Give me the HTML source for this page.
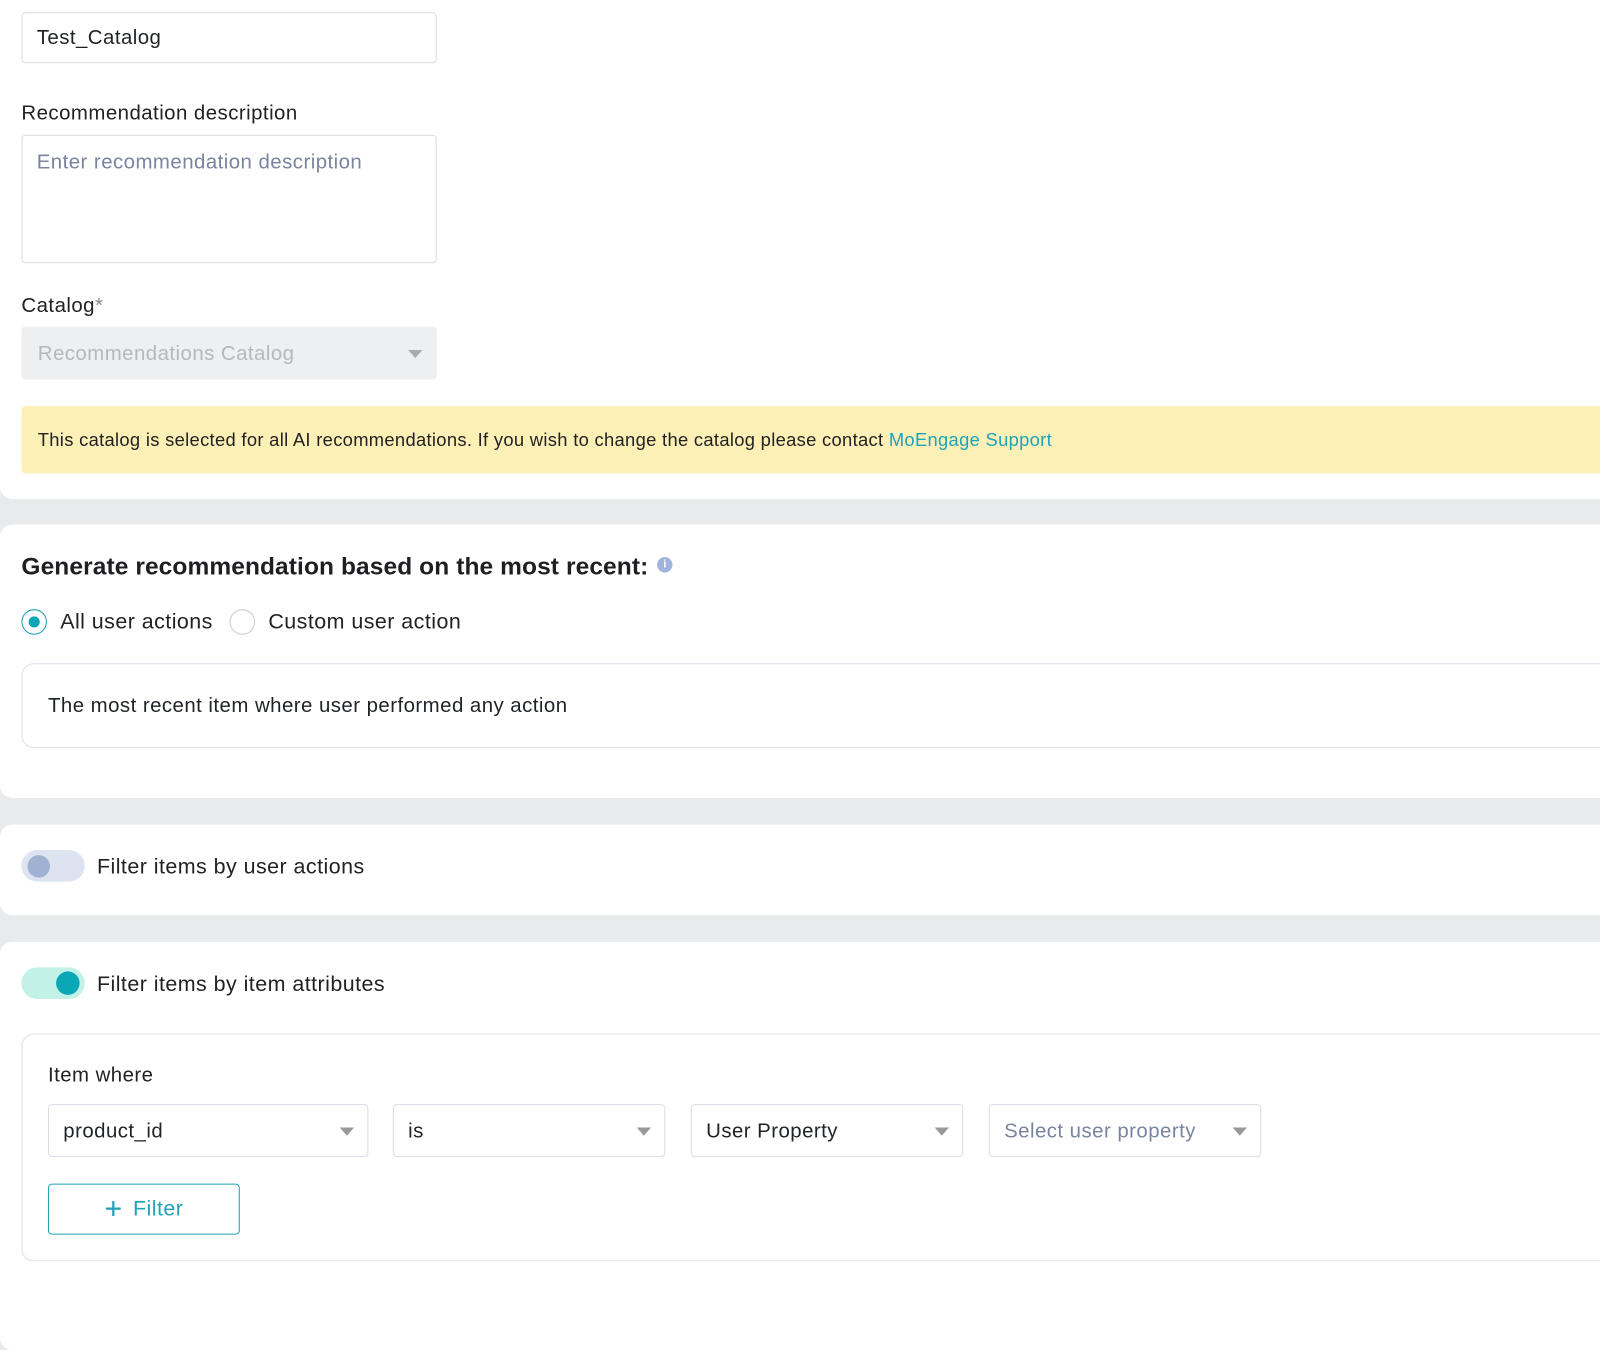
<!DOCTYPE html>
<html><head><meta charset="utf-8"><style>
*{box-sizing:border-box;margin:0;padding:0}
body{width:1600px;height:1266px;overflow:hidden;background:#e9eaeb;font-family:"Liberation Sans",sans-serif;color:#1f2328}
#w{position:relative;width:1568px;height:1241px;transform:scale(1.0204);transform-origin:0 0;letter-spacing:0.45px}
.card{position:absolute;left:0;width:1640px;background:#fff;border-radius:12px}
.abs{position:absolute}
.inp{position:absolute;border:1px solid #d9dce6;border-radius:4px;background:#fff;font-size:20px;padding-left:14px;display:flex;align-items:center}
.lbl{position:absolute;font-size:20px;color:#222}
.arrow{position:absolute;width:0;height:0;border-left:7px solid transparent;border-right:7px solid transparent;border-top:8px solid #999}
</style></head><body><div id="w">
<div class="card" style="top:-20px;height:509px"></div>
<div class="card" style="top:514px;height:268px"></div>
<div class="card" style="top:808px;height:89px"></div>
<div class="card" style="top:923px;height:400px"></div>

<div class="inp" style="left:21px;top:12px;width:407px;height:50px">Test_Catalog</div>
<div class="lbl" style="left:21px;top:100px">Recommendation description</div>
<div class="inp" style="left:21px;top:132px;width:407px;height:126px;align-items:flex-start;padding-top:15px;color:#7a84a0">Enter recommendation description</div>
<div class="lbl" style="left:21px;top:289px">Catalog<span style="color:#888">*</span></div>
<div class="inp" style="left:21px;top:320px;width:407px;height:52px;background:#eeeff0;border-color:#eeeff0;color:#b5b8bd;padding-left:15px;padding-top:3px">Recommendations Catalog</div>
<div class="arrow" style="left:400px;top:343px;border-top-color:#aaa"></div>
<div class="abs" style="left:21px;top:398px;width:1600px;height:66px;background:#fdf0b7;border-radius:4px;font-size:18px;padding:23px 0 0 16px;color:#222;letter-spacing:0.3px">This catalog is selected for all AI recommendations. If you wish to change the catalog please contact <span style="color:#1fa3b8">MoEngage Support</span></div>

<div class="abs" style="left:21px;top:542px;font-size:24px;font-weight:bold;color:#1e1f22;letter-spacing:0.1px">Generate recommendation based on the most recent:</div>
<div class="abs" style="left:644px;top:546px;width:15px;height:15px;border-radius:50%;background:#9fb3dc;color:#fff;font-size:11px;font-weight:bold;text-align:center;line-height:15px;letter-spacing:0">i</div>
<div class="abs" style="left:21px;top:597px;width:25px;height:25px;border-radius:50%;border:1.5px solid #1aa3b3"></div>
<div class="abs" style="left:28px;top:604px;width:11px;height:11px;border-radius:50%;background:#0ea5b4"></div>
<div class="lbl" style="left:59px;top:598px;font-size:21px">All user actions</div>
<div class="abs" style="left:225px;top:597px;width:25px;height:25px;border-radius:50%;border:1.5px solid #c6cbe0"></div>
<div class="lbl" style="left:263px;top:598px;font-size:21px">Custom user action</div>
<div class="abs" style="left:21px;top:650px;width:1600px;height:83px;border:1px solid #dde0ea;border-radius:12px;font-size:20px;padding:30px 0 0 25px">The most recent item where user performed any action</div>

<div class="abs" style="left:21px;top:833px;width:62px;height:31px;border-radius:16px;background:#dde3f1"></div>
<div class="abs" style="left:27px;top:838px;width:22px;height:22px;border-radius:50%;background:#a0b1d3"></div>
<div class="lbl" style="left:95px;top:838px;font-size:21px">Filter items by user actions</div>

<div class="abs" style="left:21px;top:948px;width:62px;height:31px;border-radius:16px;background:#c2f2e7"></div>
<div class="abs" style="left:55px;top:952px;width:23px;height:23px;border-radius:50%;background:#0aa7b6"></div>
<div class="lbl" style="left:95px;top:953px;font-size:21px">Filter items by item attributes</div>

<div class="abs" style="left:21px;top:1013px;width:1600px;height:223px;border:1px solid #dde0ea;border-radius:12px"></div>
<div class="lbl" style="left:47px;top:1043px">Item where</div>
<div class="inp" style="left:47px;top:1082px;width:314px;height:52px;padding-top:3px">product_id</div><div class="arrow" style="left:333px;top:1105px"></div>
<div class="inp" style="left:385px;top:1082px;width:267px;height:52px;padding-top:3px">is</div><div class="arrow" style="left:624px;top:1105px"></div>
<div class="inp" style="left:677px;top:1082px;width:267px;height:52px;padding-top:3px">User Property</div><div class="arrow" style="left:916px;top:1105px"></div>
<div class="inp" style="left:969px;top:1082px;width:267px;height:52px;color:#7a84a0;padding-top:3px">Select user property</div><div class="arrow" style="left:1208px;top:1105px"></div>
<div class="abs" style="left:47px;top:1160px;width:188px;height:50px;border:1px solid #1fa3b3;border-radius:4px;color:#1fa3b8;font-size:21px;display:flex;align-items:center;justify-content:center"><span style="font-size:30px;font-weight:300;margin-right:10px;line-height:1">+</span>Filter</div>
</div></body></html>
